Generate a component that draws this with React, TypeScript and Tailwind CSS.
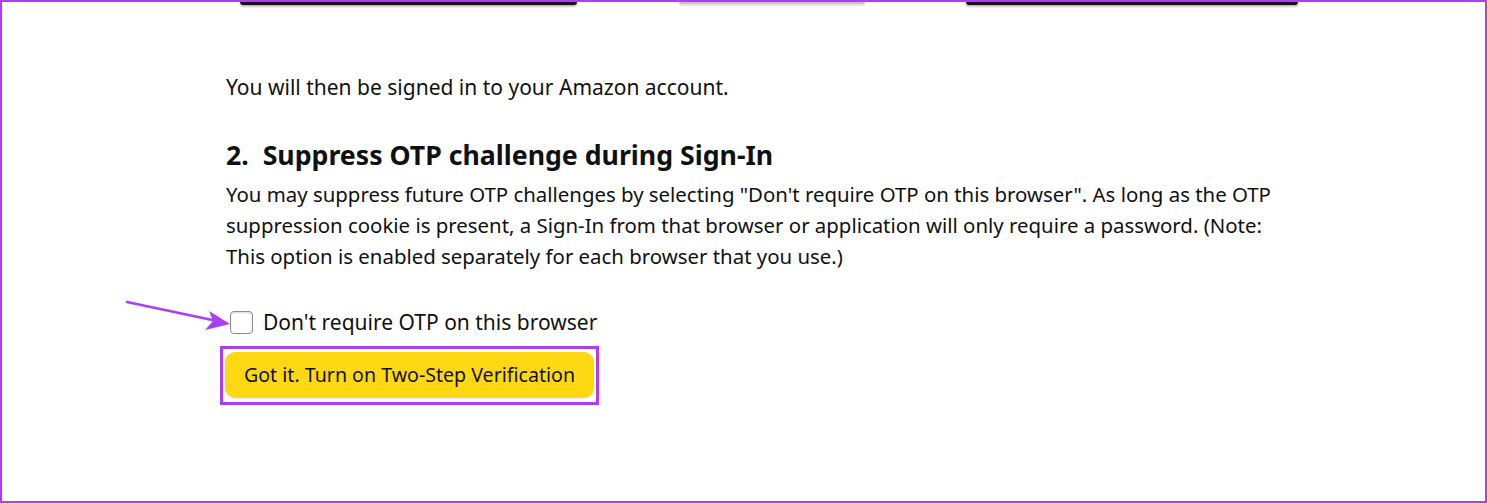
export default function App() {
  return (
    <div
      className="relative h-[503px] w-[1487px] overflow-hidden border-2 border-[#b03cf6] bg-white text-[#0f1111]"
      style={{ fontFamily: '"Noto Sans", "Liberation Sans", sans-serif' }}
    >
      {/* cut-off buttons from the step above */}
      <div className="flex h-[6px] items-start">
        <div className="ml-[238px] h-[3px] w-[337px] rounded-b-[6px] bg-[#1a0d1f] shadow-[0_1px_3px_rgba(0,0,0,0.45)]" />
        <div className="ml-[102px] h-[2px] w-[186px] rounded-b-full bg-[#c9c3cc] shadow-[0_1px_3px_rgba(0,0,0,0.25)]" />
        <div className="ml-[101px] h-[3px] w-[332px] rounded-b-[6px] bg-[#1a0d1f] shadow-[0_1px_3px_rgba(0,0,0,0.45)]" />
      </div>

      <div className="pl-[224px] pt-[64px]">
        <p className="text-[21px] leading-[30px]">You will then be signed in to your Amazon account.</p>

        <h2 className="mt-[36px] text-[26.7px] font-bold leading-[34px]">2.&nbsp;&nbsp;Suppress OTP challenge during Sign-In</h2>
        <p className="mt-[7px] whitespace-nowrap text-[20.4px] leading-[31px]">
          You may suppress future OTP challenges by selecting "Don't require OTP on this browser". As long as the OTP
          <br />
          suppression cookie is present, a Sign-In from that browser or application will only require a password. (Note:
          <br />
          This option is enabled separately for each browser that you use.)
        </p>

        <label className="mt-[37px] flex items-center gap-[10px] pl-[4px] text-[21px] leading-[26px]">
          <span className="h-[23px] w-[23px] rounded-[4px] border border-[#8a8d8f] bg-white shadow-[inset_0_1px_2px_rgba(0,0,0,0.15)]" />
          Don't require OTP on this browser
        </label>

        <div className="-ml-[6px] mt-[11px] inline-flex border-[3px] border-[#a93ff4] px-[2px] pb-[4px] pt-[3px]">
          <button className="h-[46px] rounded-[10px] bg-[#ffd814] px-[19px] text-[19.6px] text-[#0f1111] shadow-[0_1px_2px_rgba(213,217,217,0.5)]">
            Got it. Turn on Two-Step Verification
          </button>
        </div>
      </div>

      <svg className="absolute left-[123px] top-[298px]" width="110" height="34" viewBox="0 0 110 34">
        <line x1="2" y1="2" x2="92" y2="21" stroke="#a93ff4" strokeWidth="2.5" strokeLinecap="round" />
        <polygon points="105,24 84,11 88,21 80,30" fill="#a93ff4" />
      </svg>
    </div>
  );
}
